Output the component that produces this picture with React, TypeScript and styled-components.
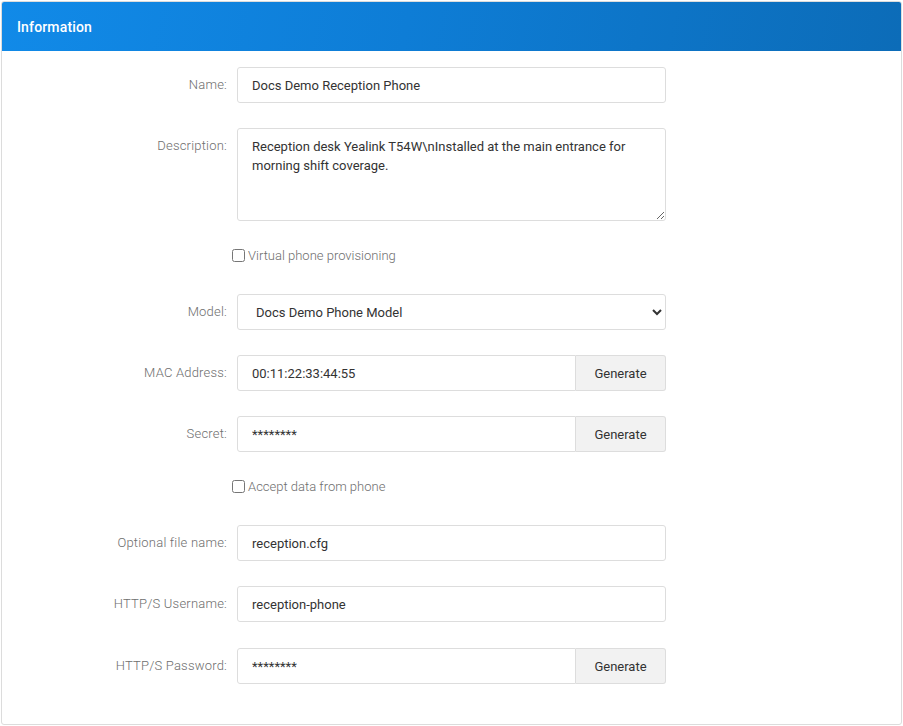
import React from "react";
import styled, { createGlobalStyle } from "styled-components";

const GlobalStyle = createGlobalStyle`
    html, body {
        margin: 0;
        padding: 0;
        background: #ffffff;
        font-family: Roboto, "Liberation Sans", sans-serif;
        font-size: 13px;
    }
`;

const Page = styled.div`
    padding: 1px;
`;

const Panel = styled.div`
    border: 1px solid #dcdcdc;
    border-radius: 3px;
    height: 724px;
    box-sizing: border-box;
    overflow: hidden;
`;

const Header = styled.div`
    height: 49px;
    display: flex;
    align-items: center;
    padding: 0 15px;
    background: linear-gradient(100deg, #118ae8 0%, #0e7dd6 45%, #0c6cb8 100%);
    color: #ffffff;
    font-size: 14px;
    font-weight: 500;
    letter-spacing: 0.15px;
`;

const Body = styled.div`
    padding-top: 16px;
    display: flex;
    flex-direction: column;
`;

const Row = styled.div<{ $gapAfter?: number }>`
    display: grid;
    grid-template-columns: 225px 429px;
    column-gap: 10px;
    align-items: start;
    margin-bottom: ${(p) => p.$gapAfter ?? 25}px;
`;

const Label = styled.label`
    text-align: right;
    color: #6e6e6e;
    font-weight: 300;
    letter-spacing: 0.2px;
    line-height: 36px;
    font-size: 13px;
`;

const baseField = `
    box-sizing: border-box;
    width: 100%;
    border: 1px solid #dddddd;
    border-radius: 3px;
    font-family: Roboto, "Liberation Sans", sans-serif;
    font-size: 13px;
    color: #333333;
    background: #ffffff;
    outline: none;
`;

const Input = styled.input`
    ${baseField}
    height: 36px;
    padding: 0 14px;
`;

const TextArea = styled.textarea`
    ${baseField}
    height: 93px;
    padding: 8px 14px;
    line-height: 19px;
    resize: vertical;
    display: block;
`;

const Select = styled.select`
    ${baseField}
    height: 36px;
    padding: 0 10px 0 14px;
`;

const Group = styled.div`
    display: flex;
    width: 100%;
`;

const GroupInput = styled(Input)`
    flex: 1;
    border-top-right-radius: 0;
    border-bottom-right-radius: 0;
`;

const GenerateButton = styled.button`
    box-sizing: border-box;
    width: 90px;
    height: 36px;
    border: 1px solid #dddddd;
    border-left: none;
    border-radius: 0 3px 3px 0;
    background: #f2f2f2;
    color: #333333;
    font-family: Roboto, "Liberation Sans", sans-serif;
    font-size: 13px;
    cursor: pointer;
`;

const CheckLabel = styled.label`
    display: flex;
    align-items: center;
    margin-left: -5px;
    height: 18px;
    color: #6e6e6e;
    font-weight: 300;
    font-size: 13px;
`;

const CheckBox = styled.input`
    margin: 0 3px 0 0;
    width: 13px;
    height: 13px;
`;

const FieldRow: React.FC<{ label: string; children: React.ReactNode; gapAfter?: number }> = ({ label, children, gapAfter }) => (
    <Row $gapAfter={gapAfter}>
        <Label>{label}</Label>
        <div>{children}</div>
    </Row>
);

const GenerateField: React.FC<{ value: string }> = ({ value }) => (
    <Group>
        <GroupInput defaultValue={value} />
        <GenerateButton type="button">Generate</GenerateButton>
    </Group>
);

const App: React.FC = () => {
    return (
        <Page>
            <GlobalStyle />
            <Panel>
                <Header>Information</Header>
                <Body>
                    <FieldRow label="Name:">
                        <Input defaultValue="Docs Demo Reception Phone" />
                    </FieldRow>
                    <FieldRow label="Description:">
                        <TextArea defaultValue={"Reception desk Yealink T54W\\nInstalled at the main entrance for morning shift coverage."} />
                    </FieldRow>
                    <FieldRow label="" gapAfter={30}>
                        <CheckLabel>
                            <CheckBox type="checkbox" />
                            Virtual phone provisioning
                        </CheckLabel>
                    </FieldRow>
                    <FieldRow label="Model:">
                        <Select defaultValue="docs">
                            <option value="docs">Docs Demo Phone Model</option>
                        </Select>
                    </FieldRow>
                    <FieldRow label="MAC Address:">
                        <GenerateField value="00:11:22:33:44:55" />
                    </FieldRow>
                    <FieldRow label="Secret:">
                        <GenerateField value="********" />
                    </FieldRow>
                    <FieldRow label="" gapAfter={30}>
                        <CheckLabel>
                            <CheckBox type="checkbox" />
                            Accept data from phone
                        </CheckLabel>
                    </FieldRow>
                    <FieldRow label="Optional file name:">
                        <Input defaultValue="reception.cfg" />
                    </FieldRow>
                    <FieldRow label="HTTP/S Username:" gapAfter={26}>
                        <Input defaultValue="reception-phone" />
                    </FieldRow>
                    <FieldRow label="HTTP/S Password:">
                        <GenerateField value="********" />
                    </FieldRow>
                </Body>
            </Panel>
        </Page>
    );
};

export default App;
